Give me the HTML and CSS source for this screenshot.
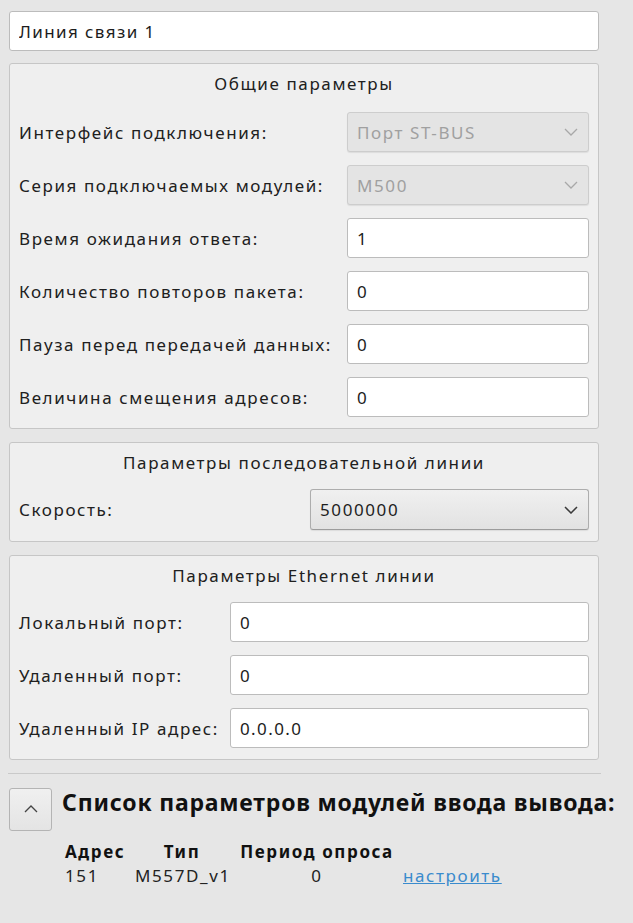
FILE: index.html
```html
<!DOCTYPE html>
<html lang="ru">
<head>
    <meta charset="UTF-8">
    <meta name="viewport" content="width=device-width, initial-scale=1.0">
    <title>Линия связи</title>
    <link rel="stylesheet" href="styles.css">
</head>
<body>
    <main class="panel">
        <input class="field name-field" type="text" value="Линия связи 1">

        <section class="group group--general">
            <h3 class="group-title">Общие параметры</h3>
            <div class="rows rows--general">
                <label class="row-label">Интерфейс подключения:</label>
                <div class="combo combo--disabled">
                    <span>Порт ST-BUS</span>
                    <svg class="chevron" width="14" height="8" viewBox="0 0 14 8"><path d="M1 1 L7 7 L13 1" fill="none" stroke="currentColor" stroke-width="1.3"/></svg>
                </div>
                <label class="row-label">Серия подключаемых модулей:</label>
                <div class="combo combo--disabled">
                    <span>M500</span>
                    <svg class="chevron" width="14" height="8" viewBox="0 0 14 8"><path d="M1 1 L7 7 L13 1" fill="none" stroke="currentColor" stroke-width="1.3"/></svg>
                </div>
                <label class="row-label" for="timeout">Время ожидания ответа:</label>
                <input class="field" id="timeout" type="text" value="1">
                <label class="row-label" for="retries">Количество повторов пакета:</label>
                <input class="field" id="retries" type="text" value="0">
                <label class="row-label" for="pause">Пауза перед передачей данных:</label>
                <input class="field" id="pause" type="text" value="0">
                <label class="row-label" for="offset">Величина смещения адресов:</label>
                <input class="field" id="offset" type="text" value="0">
            </div>
        </section>

        <section class="group">
            <h3 class="group-title">Параметры последовательной линии</h3>
            <div class="rows rows--serial">
                <label class="row-label">Скорость:</label>
                <div class="combo">
                    <span>5000000</span>
                    <svg class="chevron" width="14" height="8" viewBox="0 0 14 8"><path d="M1 1 L7 7 L13 1" fill="none" stroke="currentColor" stroke-width="1.5"/></svg>
                </div>
            </div>
        </section>

        <section class="group">
            <h3 class="group-title">Параметры Ethernet линии</h3>
            <div class="rows rows--ethernet">
                <label class="row-label" for="localPort">Локальный порт:</label>
                <input class="field" id="localPort" type="text" value="0">
                <label class="row-label" for="remotePort">Удаленный порт:</label>
                <input class="field" id="remotePort" type="text" value="0">
                <label class="row-label" for="remoteIp">Удаленный IP адрес:</label>
                <input class="field" id="remoteIp" type="text" value="0.0.0.0">
            </div>
        </section>

        <hr class="separator">

        <div class="modules-head">
            <button type="button" class="toggle-btn">
                <svg width="14" height="8" viewBox="0 0 14 8"><path d="M1 7 L7 1 L13 7" fill="none" stroke="currentColor" stroke-width="1.3"/></svg>
            </button>
            <h2 class="modules-title">Список параметров модулей ввода вывода:</h2>
        </div>

        <div class="modules-table">
            <span class="th th--left">Адрес</span>
            <span class="th">Тип</span>
            <span class="th">Период опроса</span>
            <span></span>
            <span class="td td--left">151</span>
            <span class="td">M557D_v1</span>
            <span class="td">0</span>
            <a class="td-link" href="#">настроить </a>
        </div>
    </main>
</body>
</html>
```

FILE: styles.css
```css
/* Base */
body {
    margin: 0;
    background-color: #e6e6e6;
    color: #202020;
    font-family: 'Noto Sans', 'Open Sans', sans-serif;
    font-size: 17px;
    letter-spacing: 1.6px;
}
.panel {
    width: 590px;
    padding: 11px 0 0 9px;
}

/* Fields */
.field {
    box-sizing: border-box;
    display: block;
    width: 100%;
    height: 40px;
    margin: 0;
    padding: 0 9px;
    border: 1px solid #bcbcbc;
    border-radius: 3px;
    background: #fff;
    color: #1c1c1c;
    font-family: inherit;
    font-size: 17px;
    letter-spacing: 1.4px;
    outline: none;
}
.combo {
    box-sizing: border-box;
    display: flex;
    align-items: center;
    justify-content: space-between;
    height: 41px;
    padding: 0 10px 0 9px;
    border: 1px solid #adadad;
    border-bottom-color: #9c9c9c;
    border-radius: 3px;
    background: linear-gradient(#f0f0f0, #e2e2e2);
    box-shadow: 0 1px 1px rgba(0, 0, 0, 0.08);
    color: #1e1e1e;
    font-size: 17px;
}
.combo .chevron {
    color: #3a3a3a;
}
.combo--disabled {
    height: 40px;
    border-color: #cdcdcd;
    background: #e4e4e4;
    color: #a0a0a0;
}
.combo--disabled .chevron {
    color: #a8a8a8;
}

/* Group boxes */
.name-field {
    margin-bottom: 12px;
}
.group {
    box-sizing: border-box;
    padding: 0 9px 11px;
    margin-bottom: 13px;
    border: 1px solid #c6c6c6;
    border-radius: 3px;
    background: #efefef;
}
.group-title {
    margin: 0 0 15px;
    padding-top: 9px;
    line-height: 22px;
    font-size: 17px;
    font-weight: normal;
    text-align: center;
}
.group--general .group-title {
    margin-bottom: 17px;
}
.rows {
    display: grid;
    row-gap: 13px;
    align-items: center;
}
.rows--general {
    grid-template-columns: 328px 1fr;
}
.rows--serial {
    grid-template-columns: 291px 1fr;
}
.rows--ethernet {
    grid-template-columns: 211px 1fr;
}
.row-label {
    white-space: nowrap;
}

.separator {
    width: 593px;
    margin: 0 0 12px -1px;
    border: none;
    border-top: 1px solid #c9c9c9;
}

/* Modules list */
.modules-head {
    display: flex;
    align-items: center;
    gap: 10px;
}
.toggle-btn {
    box-sizing: border-box;
    flex-shrink: 0;
    width: 43px;
    height: 43px;
    padding: 0;
    border: 1px solid #b4b4b4;
    border-radius: 3px;
    background: linear-gradient(#f0f0f0, #e4e4e4);
    color: #444;
    display: flex;
    align-items: center;
    justify-content: center;
}
.modules-title {
    margin: 0 0 14px;
    font-size: 23px;
    font-weight: bold;
    letter-spacing: 0.8px;
    color: #111;
    white-space: nowrap;
}
.modules-table {
    display: grid;
    grid-template-columns: 70px 94px 176px auto;
    margin: 8px 0 0 56px;
    row-gap: 1px;
}
.th {
    font-weight: bold;
    font-size: 17px;
    letter-spacing: 1.6px;
    color: #111;
    text-align: center;
    white-space: nowrap;
}
.td {
    text-align: center;
    color: #222;
}
.th--left,
.td--left {
    text-align: left;
}
.td-link {
    color: #3a8bcd;
    margin-left: -2px;
}
```
